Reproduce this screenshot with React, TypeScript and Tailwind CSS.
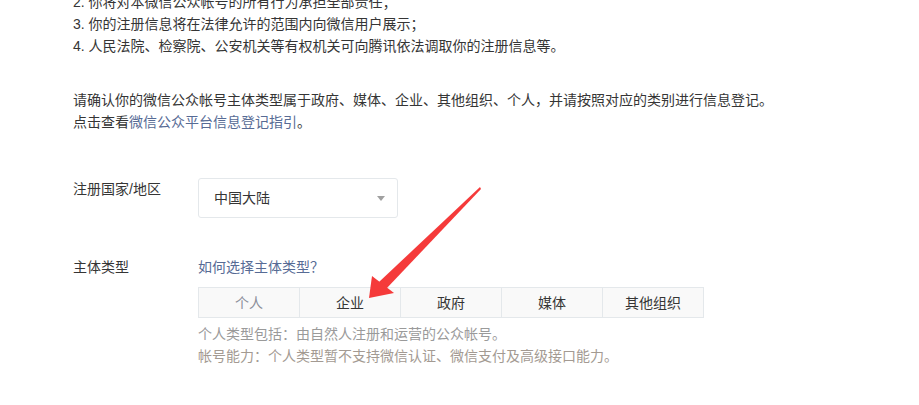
import React from "react";

const tabs = ["个人", "企业", "政府", "媒体", "其他组织"];

const Arrow = () => (
  <svg
    className="absolute left-0 top-0 pointer-events-none"
    width="919"
    height="405"
    viewBox="0 0 919 405"
  >
    {/* tapered shaft */}
    <polygon points="480,187 481,189 386,289 379,282" fill="#f53a3a" />
    {/* head */}
    <polygon points="369,298 372,276 394,293" fill="#f53a3a" />
  </svg>
);

export default function App() {
  return (
    <div
      className="relative w-[919px] h-[405px] overflow-hidden bg-white text-[14px] leading-[22px] text-[#353535]"
      style={{ fontFamily: '"Liberation Sans", "Noto Sans CJK SC", sans-serif' }}
    >
      <div className="pl-[73px] -mt-[9px]">
        <p>2. 你将对本微信公众帐号的所有行为承担全部责任；</p>
        <p>3. 你的注册信息将在法律允许的范围内向微信用户展示；</p>
        <p>4. 人民法院、检察院、公安机关等有权机关可向腾讯依法调取你的注册信息等。</p>

        <p className="mt-[32px]">
          请确认你的微信公众帐号主体类型属于政府、媒体、企业、其他组织、个人，并请按照对应的类别进行信息登记。
        </p>
        <p>
          点击查看<span className="text-[#576b95]">微信公众平台信息登记指引</span>。
        </p>

        <div className="mt-[45px] flex items-start">
          <div className="w-[125px]">注册国家/地区</div>
          <div className="w-[200px] h-[40px] border border-[#e4e8eb] rounded-[3px] flex items-center justify-between pl-[15px] pr-[12px]">
            <span>中国大陆</span>
            <span className="w-0 h-0 border-l-[4px] border-r-[4px] border-t-[5px] border-l-transparent border-r-transparent border-t-[#a0a0a0]" />
          </div>
        </div>

        <div className="mt-[38px] flex items-start">
          <div className="w-[125px]">主体类型</div>
          <div>
            <div className="text-[#576b95]">如何选择主体类型？</div>
            <div className="mt-[9px] flex w-[506px] border border-[#e4e8eb] bg-[#f9f9f9]">
              {tabs.map((t, i) => (
                <div
                  key={t}
                  className={
                    "flex-1 h-[29px] flex items-center justify-center " +
                    (i > 0 ? "border-l border-[#e4e8eb] " : "") +
                    (i === 0 ? "text-[#8c8f99]" : "text-[#353535]")
                  }
                >
                  {t}
                </div>
              ))}
            </div>
            <p className="mt-[5px] text-[#9a9a9a]">个人类型包括：由自然人注册和运营的公众帐号。</p>
            <p className="text-[#a39a92]">帐号能力：个人类型暂不支持微信认证、微信支付及高级接口能力。</p>
          </div>
        </div>
      </div>
      <Arrow />
    </div>
  );
}
